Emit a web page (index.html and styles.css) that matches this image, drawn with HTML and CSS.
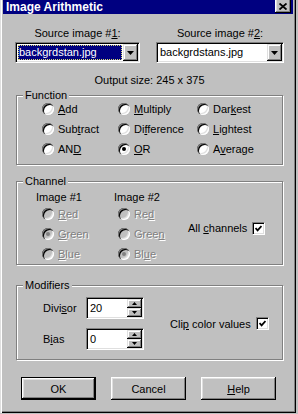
FILE: index.html
```html
<!DOCTYPE html>
<html>
<head>
<meta charset="utf-8">
<title>Image Arithmetic</title>
<link rel="stylesheet" href="styles.css">
</head>
<body>
<div class="window">
  <div class="titlebar">
    <span class="title">Image Arithmetic</span>
    <span class="close">
      <svg width="8" height="7" viewBox="0 0 8 7"><path d="M0.5 0.5 L7.5 6.5 M7.5 0.5 L0.5 6.5" stroke="#000" stroke-width="1.8" fill="none"/></svg>
    </span>
  </div>

  <div class="content">
    <div class="sources">
      <div class="source src1">
        <div class="caption">Source image #<u>1</u>:</div>
        <div class="combo">
          <span class="value selected">backgrdstan.jpg</span>
          <span class="drop"><svg width="7" height="4" viewBox="0 0 7 4"><polygon points="0,0 7,0 3.5,4" fill="#000"/></svg></span>
        </div>
      </div>
      <div class="source src2">
        <div class="caption">Source image #<u>2</u>:</div>
        <div class="combo">
          <span class="value">backgrdstans.jpg</span>
          <span class="drop"><svg width="7" height="4" viewBox="0 0 7 4"><polygon points="0,0 7,0 3.5,4" fill="#000"/></svg></span>
        </div>
      </div>
    </div>

    <div class="output">Output size: 245 x 375</div>

    <fieldset class="group">
      <legend>Function</legend>
      <div class="inner func">
        <label class="opt"><span class="radio"></span><span><u>A</u>dd</span></label>
        <label class="opt"><span class="radio"></span><span><u>M</u>ultiply</span></label>
        <label class="opt"><span class="radio"></span><span>Dar<u>k</u>est</span></label>
        <label class="opt"><span class="radio"></span><span>Sub<u>t</u>ract</span></label>
        <label class="opt"><span class="radio"></span><span>Di<u>f</u>ference</span></label>
        <label class="opt"><span class="radio"></span><span><u>L</u>ightest</span></label>
        <label class="opt"><span class="radio"></span><span>AN<u>D</u></span></label>
        <label class="opt"><span class="radio on"></span><span><u>O</u>R</span></label>
        <label class="opt"><span class="radio"></span><span>A<u>v</u>erage</span></label>
      </div>
    </fieldset>

    <fieldset class="group channel">
      <legend>Channel</legend>
      <div class="inner chan">
        <div class="col col1">
          <div class="head">Image #1</div>
          <div class="list">
            <label class="opt dis"><span class="radio"></span><span><u>R</u>ed</span></label>
            <label class="opt dis"><span class="radio on"></span><span><u>G</u>reen</span></label>
            <label class="opt dis"><span class="radio"></span><span><u>B</u>lue</span></label>
          </div>
        </div>
        <div class="col col2">
          <div class="head">Image #2</div>
          <div class="list">
            <label class="opt dis"><span class="radio"></span><span>Re<u>d</u></span></label>
            <label class="opt dis"><span class="radio"></span><span>Gree<u>n</u></span></label>
            <label class="opt dis"><span class="radio on"></span><span>Bl<u>u</u>e</span></label>
          </div>
        </div>
        <label class="check all"><span>All <u>c</u>hannels</span><span class="box"><svg width="7" height="7" viewBox="0 0 7 7"><path d="M0.5 3 L2.6 5.3 L6.5 1" stroke="#000" stroke-width="1.8" fill="none"/></svg></span></label>
      </div>
    </fieldset>

    <fieldset class="group modifiers">
      <legend>Modifiers</legend>
      <div class="inner mods">
        <div class="fields">
          <div class="field">
            <span class="lbl">Divi<u>s</u>or</span>
            <div class="spin">
              <span class="num">20</span>
              <span class="arrows">
                <span class="sbtn"><svg width="5" height="3" viewBox="0 0 5 3"><polygon points="2.5,0 5,3 0,3" fill="#000"/></svg></span>
                <span class="sbtn"><svg width="5" height="3" viewBox="0 0 5 3"><polygon points="0,0 5,0 2.5,3" fill="#000"/></svg></span>
              </span>
            </div>
          </div>
          <div class="field">
            <span class="lbl">B<u>i</u>as</span>
            <div class="spin">
              <span class="num">0</span>
              <span class="arrows">
                <span class="sbtn"><svg width="5" height="3" viewBox="0 0 5 3"><polygon points="2.5,0 5,3 0,3" fill="#000"/></svg></span>
                <span class="sbtn"><svg width="5" height="3" viewBox="0 0 5 3"><polygon points="0,0 5,0 2.5,3" fill="#000"/></svg></span>
              </span>
            </div>
          </div>
        </div>
        <label class="check clip"><span>Cli<u>p</u> color values</span><span class="box"><svg width="7" height="7" viewBox="0 0 7 7"><path d="M0.5 3 L2.6 5.3 L6.5 1" stroke="#000" stroke-width="1.8" fill="none"/></svg></span></label>
      </div>
    </fieldset>

    <div class="buttons">
      <button type="button" class="btn default">OK</button>
      <button type="button" class="btn">Cancel</button>
      <button type="button" class="btn"><u>H</u>elp</button>
    </div>
  </div>
</div>
</body>
</html>
```

FILE: styles.css
```css
html,
body {
	margin: 0;
	padding: 0;
}
body {
	background: #c0c0c0;
	font-family: "Liberation Sans", Arial, sans-serif;
	font-size: 11px;
	color: #000;
}
u {
	text-decoration: underline;
	text-underline-offset: 1px;
}

/* window frame */
.window {
	box-sizing: border-box;
	width: 296px;
	height: 413px;
	padding: 0 3px 2px 3px;
	background: #c0c0c0;
	box-shadow: inset 1px 0 #dfdfdf, inset 2px 0 #fff, inset -1px -1px #000, inset -2px -2px #808080;
}
.titlebar {
	height: 14px;
	background: #000080;
	display: flex;
	align-items: flex-start;
	justify-content: space-between;
}
.title {
	color: #fff;
	font-weight: bold;
	font-size: 12px;
	line-height: 14px;
	padding-left: 3px;
}
.close {
	width: 16px;
	height: 13px;
	margin-right: 2px;
	background: #c0c0c0;
	display: flex;
	align-items: center;
	justify-content: center;
	box-shadow: inset -1px -1px #000, inset 1px 0 #fff, inset -2px -2px #808080, inset 2px 0 #dfdfdf;
}

.content {
	padding: 0 9px 0 12px;
}

/* source pickers */
.sources {
	display: flex;
	justify-content: space-between;
	margin-top: 13px;
}
.src1 {
	width: 125px;
}
.src2 {
	width: 128px;
}
.caption {
	text-align: center;
	line-height: 13px;
	margin-bottom: 2px;
}
.combo,
.spin {
	box-sizing: border-box;
	height: 21px;
	padding: 1px;
	display: flex;
	align-items: center;
	background: #fff;
	border: 1px solid;
	border-color: #808080 #fff #fff #808080;
	box-shadow: inset 1px 1px #000, inset -1px -1px #dfdfdf;
}
.value {
	flex: 1;
	height: 15px;
	line-height: 15px;
	margin: 0 1px 0 1px;
	padding-left: 1px;
	white-space: nowrap;
	overflow: hidden;
}
.value.selected {
	background: #000080;
	color: #fff;
	outline: 1px dotted #d8d870;
	outline-offset: -1px;
}
.drop,
.sbtn {
	box-sizing: border-box;
	width: 15px;
	height: 17px;
	background: #c0c0c0;
	display: flex;
	align-items: center;
	justify-content: center;
	box-shadow: inset -1px -1px #000, inset 1px 1px #dfdfdf, inset -2px -2px #808080, inset 2px 2px #fff;
}

.output {
	text-align: center;
	line-height: 13px;
	margin-top: 11px;
}

/* group boxes */
.group {
	margin: 2px 1px 0 1px;
	padding: 0;
	min-width: 0;
	border: 1px solid #808080;
	box-shadow: inset 1px 1px #fff, 1px 1px #fff;
}
.group legend {
	margin-left: 6px;
	padding: 0 2px;
	line-height: 13px;
	background: #c0c0c0;
}
.channel {
	margin-top: 10px;
}
.modifiers {
	margin-top: 14px;
}

.opt {
	display: flex;
	align-items: center;
	gap: 4px;
	height: 16px;
	white-space: nowrap;
}
.radio {
	position: relative;
	flex: none;
	width: 12px;
	height: 12px;
	border-radius: 50%;
	background: #fff;
	box-shadow: inset 1px 1px #808080, inset 2px 2px #000, inset -1px -1px #fff, inset -2px -2px #dfdfdf;
}
.radio.on::after {
	content: "";
	position: absolute;
	left: 4px;
	top: 4px;
	width: 4px;
	height: 4px;
	border-radius: 50%;
	background: #000;
}
.dis {
	color: #808080;
	text-shadow: 1px 1px 0 #fff;
}
.dis .radio {
	background: #c0c0c0;
}
.dis .radio.on::after {
	background: #808080;
}

.func {
	display: grid;
	grid-template-columns: 76px 79px auto;
	grid-template-rows: repeat(3, 16px);
	row-gap: 4px;
	margin-top: -1px;
	padding: 0 0 7px 25px;
}

.chan {
	display: flex;
	padding: 3px 0 2px 19px;
}
.col1 {
	width: 78px;
}
.col2 {
	width: 74px;
}
.head {
	line-height: 13px;
	margin-bottom: 2px;
}
.list {
	display: flex;
	flex-direction: column;
	gap: 4px;
}
.col1 .list {
	margin-left: 6px;
}
.col2 .list {
	margin-left: 4px;
}

.check {
	display: flex;
	align-items: center;
	gap: 5px;
	white-space: nowrap;
}
.box {
	box-sizing: border-box;
	width: 13px;
	height: 13px;
	background: #fff;
	display: flex;
	align-items: center;
	justify-content: center;
	border: 1px solid;
	border-color: #808080 #fff #fff #808080;
	box-shadow: inset 1px 1px #000, inset -1px -1px #dfdfdf;
}
.all {
	align-self: center;
	margin-top: 3px;
}

.mods {
	display: flex;
	align-items: center;
	padding: 5px 0 9px 26px;
}
.fields {
	display: flex;
	flex-direction: column;
	gap: 9px;
}
.field {
	display: flex;
	align-items: center;
}
.lbl {
	width: 43px;
}
.spin {
	width: 58px;
	height: 22px;
}
.num {
	flex: 1;
	padding-left: 2px;
}
.arrows {
	display: flex;
	flex-direction: column;
}
.sbtn {
	height: 9px;
}
.clip {
	margin-left: 26px;
}

/* dialog buttons */
.buttons {
	display: flex;
	gap: 15px;
	margin: 17px 0 0 6px;
}
.btn {
	box-sizing: border-box;
	width: 75px;
	height: 23px;
	padding: 0;
	border: 0;
	background: #c0c0c0;
	font-family: inherit;
	font-size: 11px;
	color: #000;
	box-shadow: inset -1px -1px #000, inset 1px 1px #fff, inset -2px -2px #808080, inset 2px 2px #dfdfdf;
}
.btn.default {
	border: 1px solid #000;
}
```
